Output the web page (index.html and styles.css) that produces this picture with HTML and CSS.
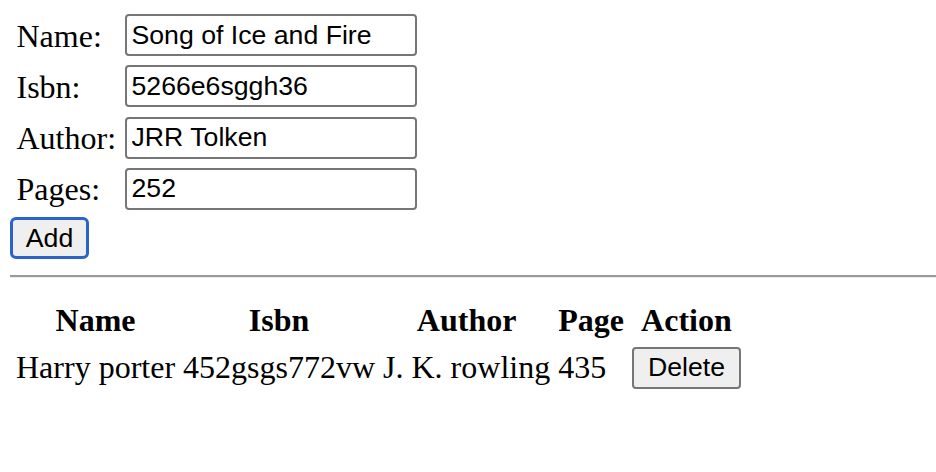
FILE: index.html
```html
<!DOCTYPE html>
<html>
<head>
<meta charset="utf-8">
<link rel="stylesheet" href="styles.css">
</head>
<body>
<form class="book-form">
  <div class="fields">
    <label class="lbl">Name:</label>
    <input class="field" type="text" value="Song of Ice and Fire">
    <label class="lbl">Isbn:</label>
    <input class="field" type="text" value="5266e6sggh36">
    <label class="lbl">Author:</label>
    <input class="field" type="text" value="JRR Tolken">
    <label class="lbl">Pages:</label>
    <input class="field" type="text" value="252">
  </div>
  <button type="button" class="btn btn-focus">Add</button>
</form>
<hr class="rule">
<table class="books">
  <thead>
    <tr><th>Name</th><th>Isbn</th><th>Author</th><th>Page</th><th>Action</th></tr>
  </thead>
  <tbody>
    <tr><td>Harry porter</td><td>452gsgs772vw</td><td>J. K. rowling</td><td>435</td><td><button type="button" class="btn">Delete</button></td></tr>
  </tbody>
</table>
</body>
</html>
```

FILE: styles.css
```css
html, body {
  background: #ffffff;
}
body {
  margin: 0;
  padding: 8px 0 0 10px;
  font-family: "Liberation Serif", "Times New Roman", serif;
  font-size: 32px;
  color: #000;
}
.book-form {
  margin: 0;
}
.fields {
  display: grid;
  grid-template-columns: 108px 292px;
  row-gap: 9.3px;
  padding: 6px 0 0 6.5px;
}
.lbl {
  align-self: center;
  line-height: 1.15;
  padding-top: 2px;
}
.field {
  box-sizing: border-box;
  width: 292px;
  height: 42px;
  margin: 0;
  padding: 0 5px;
  border: 2px solid #767676;
  border-radius: 4px;
  background: #fff;
  font-family: "Liberation Sans", Arial, sans-serif;
  font-size: 26.67px;
  color: #000;
  outline: none;
}
.btn {
  box-sizing: border-box;
  height: 42px;
  margin: 0;
  padding: 0 14px;
  border: 2px solid #767676;
  border-radius: 4px;
  background: #efefef;
  font-family: "Liberation Sans", Arial, sans-serif;
  font-size: 26.67px;
  color: #000;
  line-height: 1;
}
.btn-focus {
  display: block;
  width: 79px;
  padding: 0;
  margin-top: 7px;
  border: 3px solid #2a63cc;
  border-radius: 6px;
}
.rule {
  height: 0;
  margin: 16px 0 18px 0;
  border: 0;
  border-top: 2px solid #9a9a9a;
  border-bottom: 1px solid #ededed;
}
.books {
  border-spacing: 4px;
  border-collapse: separate;
  font-size: 32px;
}
.books th,
.books td {
  padding: 2px;
  line-height: 1.15;
  vertical-align: middle;
  white-space: nowrap;
}
.books th {
  font-weight: bold;
  text-align: center;
}
.books td {
  text-align: left;
}
```
